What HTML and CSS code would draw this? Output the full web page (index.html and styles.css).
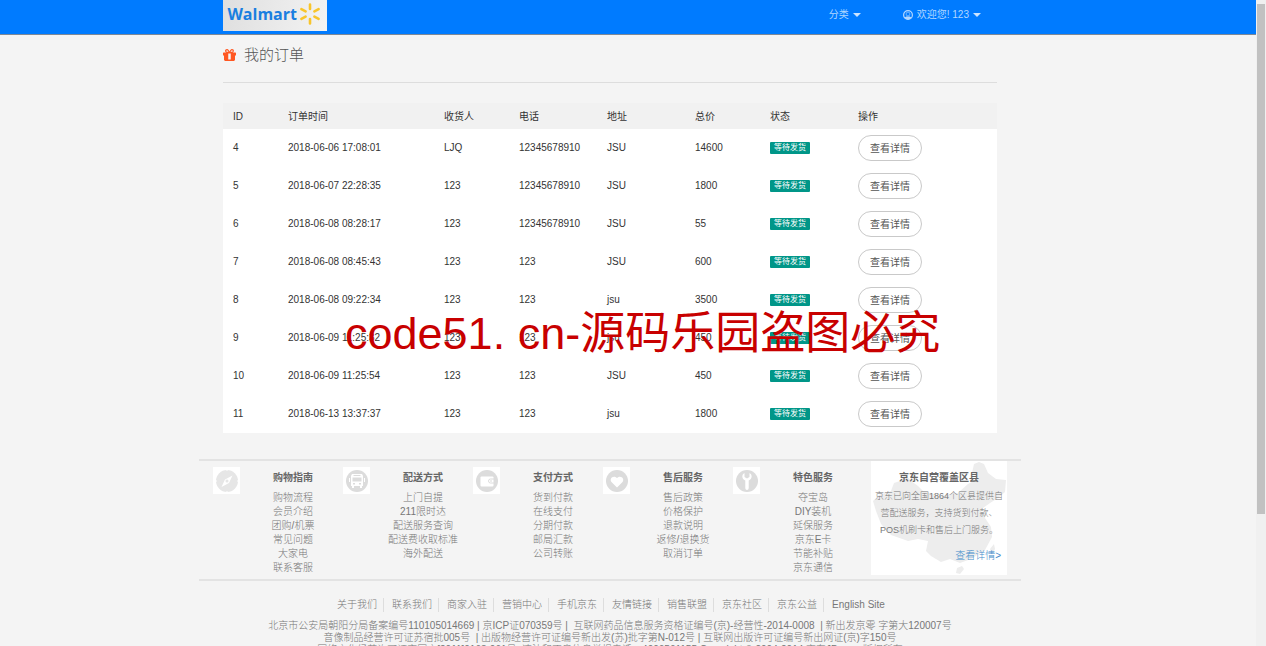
FILE: index.html
```
<!DOCTYPE html>
<html lang="zh-CN">
<head>
<meta charset="utf-8">
<title>我的订单</title>
<link rel="stylesheet" href="styles.css">
</head>
<body>
<div class="shell">
<div class="page">
  <header class="topbar">
    <div class="topbar-inner">
      <a class="logo" href="#">
        <span class="logo-text">Walmart</span>
        <svg class="spark" viewBox="-11 -11 22 22" aria-hidden="true">
          <g stroke="#f8c52c" stroke-width="2.600" stroke-linecap="round">
            <path d="M0-5V-9.500M0 5V9.500M4.400-2.600L8.600-4.900M4.400 2.600L8.600 4.900M-4.400-2.600L-8.600-4.900M-4.400 2.600L-8.600 4.900"/>
          </g>
        </svg>
      </a>
      <nav class="topnav">
        <button class="navbtn" type="button">分类<span class="caret"></span></button>
        <button class="navbtn" type="button">
          <svg class="user-icon" viewBox="0 0 20 20" aria-hidden="true"><circle cx="10" cy="10" r="8.800" fill="none" stroke="currentColor" stroke-width="2.400"/><path fill="currentColor" d="M3 15c2-1.500 3.500-2 5-2.500 1.300.8 2.700.8 4 0 1.500.5 3 1 5 2.500-3.500 5-10.500 5-14 0z"/><circle cx="10" cy="8" r="3.800" fill="none" stroke="currentColor" stroke-width="1.200"/></svg>
          <span class="hello">欢迎您! 123</span><span class="caret"></span>
        </button>
      </nav>
    </div>
  </header>

  <main class="orders">
    <h1 class="title">
      <svg class="gift" viewBox="0 0 26 24" aria-hidden="true">
        <path fill="#ff5722" fill-rule="evenodd" d="M1 7h6C3 6 3 0 8 0c3 0 4 3 5 5 1-2 2-5 5-5 5 0 5 6 1 7h6l1 1v5h-2v9l-2 2H4l-2-2v-9H0V8zM8 2.500c-2 0-2 3 0 3h3C10 4 9.500 2.500 8 2.500zM18 2.500c-1.500 0-2 1.500-3 3h3c2 0 2-3 0-3zM10.500 9v12h5V9z"/>
      </svg>
      我的订单
    </h1>
    <table class="table">
      <colgroup><col class="c-id"><col class="c-time"><col class="c-name"><col class="c-tel"><col class="c-addr"><col class="c-sum"><col class="c-state"><col></colgroup>
      <thead><tr><th>ID</th><th>订单时间</th><th>收货人</th><th>电话</th><th>地址</th><th>总价</th><th>状态</th><th>操作</th></tr></thead>
      <tbody>
        <tr><td>4</td><td>2018-06-06 17:08:01</td><td>LJQ</td><td>12345678910</td><td>JSU</td><td>14600</td><td><span class="badge">等待发货</span></td><td><button class="detail" type="button">查看详情</button></td></tr>
        <tr><td>5</td><td>2018-06-07 22:28:35</td><td>123</td><td>12345678910</td><td>JSU</td><td>1800</td><td><span class="badge">等待发货</span></td><td><button class="detail" type="button">查看详情</button></td></tr>
        <tr><td>6</td><td>2018-06-08 08:28:17</td><td>123</td><td>12345678910</td><td>JSU</td><td>55</td><td><span class="badge">等待发货</span></td><td><button class="detail" type="button">查看详情</button></td></tr>
        <tr><td>7</td><td>2018-06-08 08:45:43</td><td>123</td><td>123</td><td>JSU</td><td>600</td><td><span class="badge">等待发货</span></td><td><button class="detail" type="button">查看详情</button></td></tr>
        <tr><td>8</td><td>2018-06-08 09:22:34</td><td>123</td><td>123</td><td>jsu</td><td>3500</td><td><span class="badge">等待发货</span></td><td><button class="detail" type="button">查看详情</button></td></tr>
        <tr><td>9</td><td>2018-06-09 11:25:32</td><td>123</td><td>123</td><td>jsu</td><td>450</td><td><span class="badge">等待发货</span></td><td><button class="detail" type="button">查看详情</button></td></tr>
        <tr><td>10</td><td>2018-06-09 11:25:54</td><td>123</td><td>123</td><td>JSU</td><td>450</td><td><span class="badge">等待发货</span></td><td><button class="detail" type="button">查看详情</button></td></tr>
        <tr><td>11</td><td>2018-06-13 13:37:37</td><td>123</td><td>123</td><td>jsu</td><td>1800</td><td><span class="badge">等待发货</span></td><td><button class="detail" type="button">查看详情</button></td></tr>
      </tbody>
    </table>
  </main>

  <footer class="footer">
    <div class="services">
      <section class="service">
        <svg class="service-icon" viewBox="0 0 27 27" aria-hidden="true"><circle cx="14" cy="14" r="11" fill="#e6e6e6"/><path fill="#fff" fill-rule="evenodd" d="M19.500 8.500L16 16l-7.500 4L12 12.500zM14 12.500a1.500 1.500 0 1 0 0 3 1.500 1.500 0 0 0 0-3z"/><path stroke="#fff" d="M14 3v1M14 24v1M3 14h1M24 14h1"/></svg>
        <div class="service-body">
          <h2>购物指南</h2>
          <ul><li><a href="#">购物流程</a></li><li><a href="#">会员介绍</a></li><li><a href="#">团购/机票</a></li><li><a href="#">常见问题</a></li><li><a href="#">大家电</a></li><li><a href="#">联系客服</a></li></ul>
        </div>
      </section>
      <section class="service">
        <svg class="service-icon" viewBox="0 0 27 27" aria-hidden="true"><circle cx="14" cy="14" r="11" fill="#dcdcdc"/><path fill="#fff" fill-rule="evenodd" d="M9 7h10l1 2v10h-1v2h-2v-2h-6v2H9v-2H8V9zM10.500 8v1h7V8zM9.500 10.500v4h9v-4zM10 16v1.500h2V16zM16 16v1.500h2V16zM6 11h1v4H6zM21 11h1v4h-1z"/></svg>
        <div class="service-body">
          <h2>配送方式</h2>
          <ul><li><a href="#">上门自提</a></li><li><a href="#">211限时达</a></li><li><a href="#">配送服务查询</a></li><li><a href="#">配送费收取标准</a></li><li><a href="#">海外配送</a></li></ul>
        </div>
      </section>
      <section class="service">
        <svg class="service-icon" viewBox="0 0 27 27" aria-hidden="true"><circle cx="14" cy="14" r="11" fill="#dcdcdc"/><rect x="7.500" y="9.500" width="13" height="10" rx="1" fill="#fff"/><path d="M21 12h-3.500a2 2 0 0 0 0 4H21z" fill="#fff" stroke="#dcdcdc"/><circle cx="18" cy="14" r=".7" fill="#ccc"/></svg>
        <div class="service-body">
          <h2>支付方式</h2>
          <ul><li><a href="#">货到付款</a></li><li><a href="#">在线支付</a></li><li><a href="#">分期付款</a></li><li><a href="#">邮局汇款</a></li><li><a href="#">公司转账</a></li></ul>
        </div>
      </section>
      <section class="service">
        <svg class="service-icon" viewBox="0 0 27 27" aria-hidden="true"><circle cx="14" cy="14" r="11" fill="#dcdcdc"/><path fill="#fff" d="M14 20.500L8.500 15c-2.500-3 1.500-7.500 5.500-4 4-3.500 8 1 5.500 4z"/></svg>
        <div class="service-body">
          <h2>售后服务</h2>
          <ul><li><a href="#">售后政策</a></li><li><a href="#">价格保护</a></li><li><a href="#">退款说明</a></li><li><a href="#">返修/退换货</a></li><li><a href="#">取消订单</a></li></ul>
        </div>
      </section>
      <section class="service">
        <svg class="service-icon" viewBox="0 0 27 27" aria-hidden="true"><circle cx="14" cy="14" r="11" fill="#dcdcdc"/><path fill="#fff" d="M11.500 6v4l2.500 1.500 2.500-1.500V6c3 1.500 3 6-.8 7.500V21c0 2.500-3.400 2.500-3.400 0v-7.500C8.500 12 8.500 7.500 11.500 6z"/></svg>
        <div class="service-body">
          <h2>特色服务</h2>
          <ul><li><a href="#">夺宝岛</a></li><li><a href="#">DIY装机</a></li><li><a href="#">延保服务</a></li><li><a href="#">京东E卡</a></li><li><a href="#">节能补贴</a></li><li><a href="#">京东通信</a></li></ul>
        </div>
      </section>
      <section class="coverage">
        <svg class="map" viewBox="0 0 136 114" aria-hidden="true"><path fill="#ededed" d="M103 3L108 1L113 3L117 12L125 18L135 19L134 31L127 37L119 42L112 47L110 51L116 50L114 57L120 66L121 76L114 89L100 98L89 102L79 98L70 101L60 95L55 90L57 80L47 78L37 80L20 74L10 63L5 50L2 40L8 34L20 30L23 22L29 20L34 13L40 20L47 25L52 30L70 35L87 32L97 23L108 17L101 12ZM86 107L91 105L93 108L89 113L85 112ZM119 88L123 83L124 88L121 94Z"/></svg>
        <h2>京东自营覆盖区县</h2>
        <p>京东已向全国1864个区县提供自<br>营配送服务，支持货到付款、<br>POS机刷卡和售后上门服务。</p>
        <a class="more" href="#">查看详情&gt;</a>
      </section>
    </div>
    <nav class="links"><a href="#">关于我们</a><a href="#">联系我们</a><a href="#">商家入驻</a><a href="#">营销中心</a><a href="#">手机京东</a><a href="#">友情链接</a><a href="#">销售联盟</a><a href="#">京东社区</a><a href="#">京东公益</a><a href="#">English Site</a></nav>
    <p class="legal">北京市公安局朝阳分局备案编号110105014669 | 京ICP证070359号 |&nbsp; 互联网药品信息服务资格证编号(京)-经营性-2014-0008 &nbsp;| 新出发京零 字第大120007号<br>音像制品经营许可证苏宿批005号 &nbsp;| 出版物经营许可证编号新出发(苏)批字第N-012号 | 互联网出版许可证编号新出网证(京)字150号<br>网络文化经营许可证京网文[2011]0168-061号 &nbsp;违法和不良信息举报电话：4006561155 Copyright © 2004-2014 京东JD.com 版权所有</p>
  </footer>
  <div class="watermark">code51. cn-源码乐园盗图必究</div>
</div>
<div class="scrollbar"><div class="thumb"></div></div>
</div>
</body>
</html>
```
FILE: styles.css
```
* { box-sizing: border-box; }
body {
  margin: 0;
  background: #f4f4f4;
  color: #333;
  font: 10px/14px "Liberation Sans", "Noto Sans CJK SC", sans-serif;
}
h1, h2, p, ul { margin: 0; padding: 0; font-weight: inherit; }
ul { list-style: none; }
a { color: inherit; text-decoration: none; }
button { font: inherit; cursor: pointer; }

.shell { display: grid; grid-template-columns: minmax(0, 1fr) 10px; height: 100vh; overflow: hidden; }
.page { position: relative; overflow: hidden; }
.scrollbar { background: #f0f0f0; padding: 4px 1px 0; }
.thumb { height: 79vh; background: #c1c1c1; }

.topbar { background: #007bff; border-bottom: 1px solid #7d8896; padding-right: 36px; }
.topbar-inner {
  display: flex; justify-content: space-between; align-items: flex-start;
  max-width: 774px; min-height: 34px; margin: 0 auto; padding-right: 16px;
}
.logo {
  display: flex; align-items: center; justify-content: flex-end; gap: 2px;
  width: 104px; height: 31px; padding: 0 6px 4px 0;
  background: linear-gradient(100deg, #dfdfdf, #f3f3f3);
  color: #1a7fe0;
}
.logo-text { font: 700 16px/20px "Open Sans", sans-serif; }
.spark { width: 22px; height: 22px; }
.topnav { display: flex; gap: 42px; }
.navbtn {
  display: flex; align-items: center; gap: 4px; padding: 8px 0 6px;
  border: 0; background: none; color: #b2d7ff;
}
.user-icon { width: 10px; height: 10px; }
.caret { border: 4px solid transparent; border-top-color: #cce4ff; border-bottom: 0; }

.orders { max-width: 810px; margin: 0 auto; padding-right: 36px; }
.title {
  display: flex; align-items: center; gap: 8px;
  padding: 9px 0 17px; margin-bottom: 20px;
  border-bottom: 1px solid #ddd;
  color: #555; font-size: 15px; font-weight: 300; line-height: 21px;
}
.gift { width: 13px; height: 12px; }

.table { width: 100%; border-collapse: collapse; table-layout: fixed; background: #fff; }
.table th { height: 26px; padding: 1px 0 0 10px; background: #f1f1f1; font-weight: 400; text-align: left; }
.table td { height: 38px; padding: 0 0 0 10px; }
.c-id { width: 55px; }
.c-time { width: 156px; }
.c-name, .c-sum { width: 75px; }
.c-tel, .c-addr, .c-state { width: 88px; }
.badge {
  display: block; width: fit-content; padding: 0 4px; border-radius: 1px;
  background: #009688; color: #fff; font-size: 8px; line-height: 12px;
}
.detail {
  display: block; height: 26px; padding: 1px 11px 0;
  border: 1px solid #c9c9c9; border-radius: 13px; background: #fff; color: #555;
}

.footer { padding: 26px 36px 0 0; color: #777; text-align: center; }
.services {
  display: grid; grid-template-columns: repeat(5, minmax(0, 1fr)) 144px;
  max-width: 822px; margin: 0 auto; padding: 0 14px 4px;
  border-top: 2px solid #e3e3e3; border-bottom: 2px solid #e3e3e3;
}
.service { display: flex; align-items: flex-start; gap: 3px; padding-top: 6px; }
.service-icon { width: 27px; height: 27px; background: #fff; }
.service-body { flex: 1; padding-top: 4px; }
.service h2 { margin-bottom: 6px; }
.footer h2 { color: #666; font-size: 10px; font-weight: 700; }
.footer li, .links { font-weight: 300; }
.coverage { position: relative; margin-left: 8px; padding-top: 10px; background: #fff; font-size: 9px; font-weight: 300; }
.map { position: absolute; inset: 0; width: 100%; height: 100%; }
.coverage h2, .coverage p, .more { position: relative; }
.coverage p { padding-top: 3px; line-height: 17px; white-space: nowrap; }
.more { display: block; padding: 10px 6px 0 0; color: #428bca; font-size: 10px; text-align: right; }

.links { display: flex; justify-content: center; padding: 17px 0 8px; }
.links a { padding: 0 6px 0 8px; }
.links a + a { border-left: 1px solid #ddd; }
.legal { font-weight: 300; line-height: 12px; white-space: nowrap; }

.watermark {
  position: absolute; top: 50%; left: 345px; margin-top: -19px;
  color: #c80000; font: 45px/60px "Liberation Sans", "Noto Sans CJK SC", sans-serif;
  white-space: nowrap; pointer-events: none;
}
```
